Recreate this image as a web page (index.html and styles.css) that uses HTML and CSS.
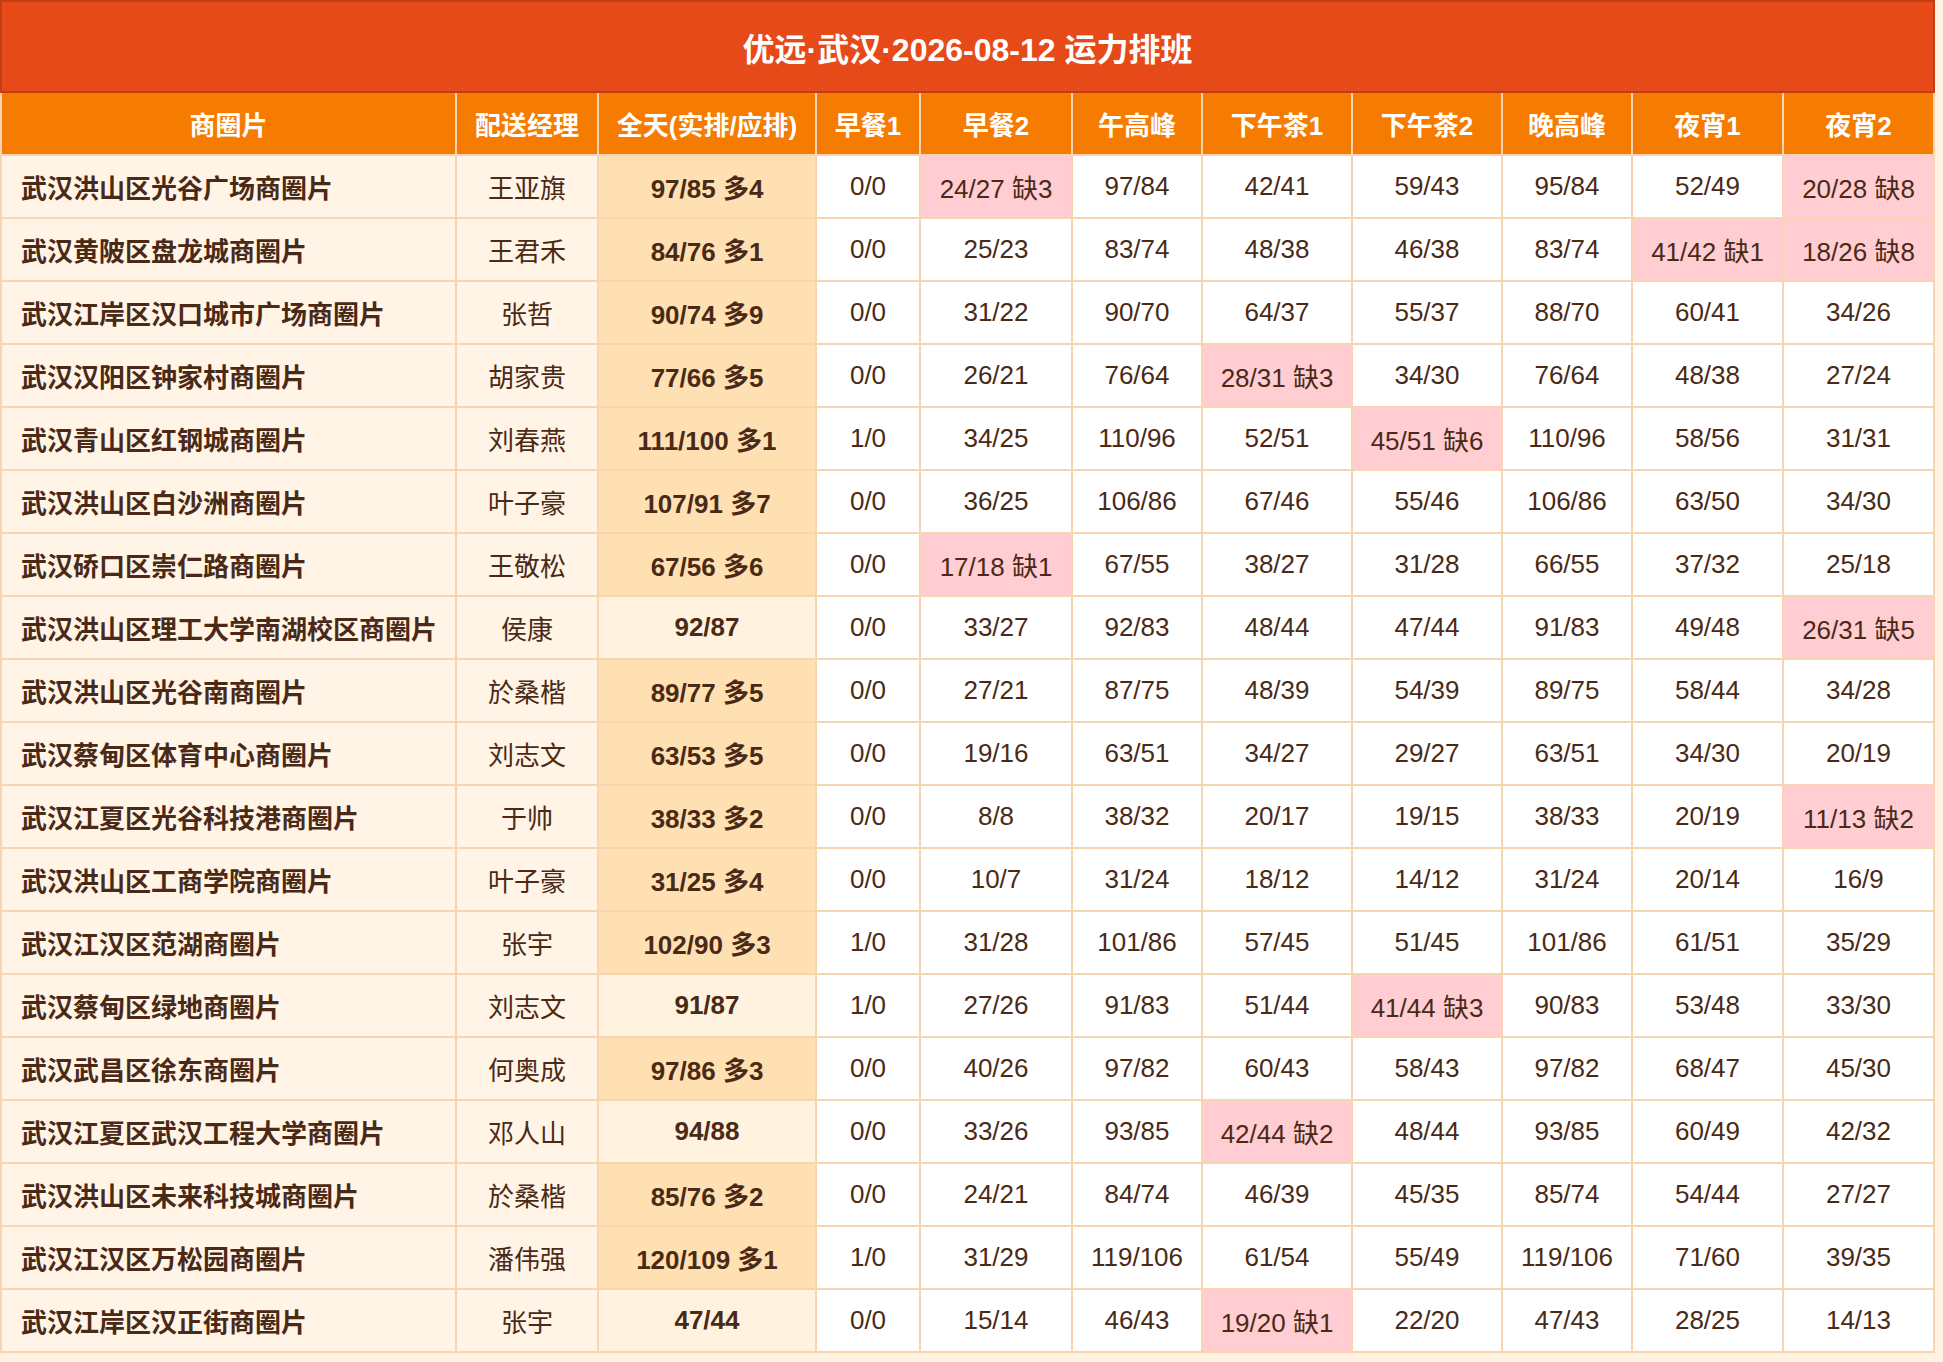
FILE: index.html
```html
<!DOCTYPE html>
<html lang="zh-CN">
<head>
<meta charset="utf-8">
<title>运力排班</title>
<link rel="stylesheet" href="styles.css">
</head>
<body>
<div class="page">
  <div class="title">优远·武汉·2026-08-12 运力排班</div>
  <div class="grid">
    <div class="hd">商圈片</div><div class="hd">配送经理</div><div class="hd">全天(实排/应排)</div><div class="hd">早餐1</div><div class="hd">早餐2</div><div class="hd">午高峰</div><div class="hd">下午茶1</div><div class="hd">下午茶2</div><div class="hd">晚高峰</div><div class="hd">夜宵1</div><div class="hd">夜宵2</div>

    <div class="c name">武汉洪山区光谷广场商圈片</div><div class="c mgr">王亚旗</div><div class="c total">97/85 多4</div><div class="c">0/0</div><div class="c short">24/27 缺3</div><div class="c">97/84</div><div class="c">42/41</div><div class="c">59/43</div><div class="c">95/84</div><div class="c">52/49</div><div class="c short">20/28 缺8</div>

    <div class="c name">武汉黄陂区盘龙城商圈片</div><div class="c mgr">王君禾</div><div class="c total">84/76 多1</div><div class="c">0/0</div><div class="c">25/23</div><div class="c">83/74</div><div class="c">48/38</div><div class="c">46/38</div><div class="c">83/74</div><div class="c short">41/42 缺1</div><div class="c short">18/26 缺8</div>

    <div class="c name">武汉江岸区汉口城市广场商圈片</div><div class="c mgr">张哲</div><div class="c total">90/74 多9</div><div class="c">0/0</div><div class="c">31/22</div><div class="c">90/70</div><div class="c">64/37</div><div class="c">55/37</div><div class="c">88/70</div><div class="c">60/41</div><div class="c">34/26</div>

    <div class="c name">武汉汉阳区钟家村商圈片</div><div class="c mgr">胡家贵</div><div class="c total">77/66 多5</div><div class="c">0/0</div><div class="c">26/21</div><div class="c">76/64</div><div class="c short">28/31 缺3</div><div class="c">34/30</div><div class="c">76/64</div><div class="c">48/38</div><div class="c">27/24</div>

    <div class="c name">武汉青山区红钢城商圈片</div><div class="c mgr">刘春燕</div><div class="c total">111/100 多1</div><div class="c">1/0</div><div class="c">34/25</div><div class="c">110/96</div><div class="c">52/51</div><div class="c short">45/51 缺6</div><div class="c">110/96</div><div class="c">58/56</div><div class="c">31/31</div>

    <div class="c name">武汉洪山区白沙洲商圈片</div><div class="c mgr">叶子豪</div><div class="c total">107/91 多7</div><div class="c">0/0</div><div class="c">36/25</div><div class="c">106/86</div><div class="c">67/46</div><div class="c">55/46</div><div class="c">106/86</div><div class="c">63/50</div><div class="c">34/30</div>

    <div class="c name">武汉硚口区崇仁路商圈片</div><div class="c mgr">王敬松</div><div class="c total">67/56 多6</div><div class="c">0/0</div><div class="c short">17/18 缺1</div><div class="c">67/55</div><div class="c">38/27</div><div class="c">31/28</div><div class="c">66/55</div><div class="c">37/32</div><div class="c">25/18</div>

    <div class="c name">武汉洪山区理工大学南湖校区商圈片</div><div class="c mgr">侯康</div><div class="c total even">92/87</div><div class="c">0/0</div><div class="c">33/27</div><div class="c">92/83</div><div class="c">48/44</div><div class="c">47/44</div><div class="c">91/83</div><div class="c">49/48</div><div class="c short">26/31 缺5</div>

    <div class="c name">武汉洪山区光谷南商圈片</div><div class="c mgr">於桑楷</div><div class="c total">89/77 多5</div><div class="c">0/0</div><div class="c">27/21</div><div class="c">87/75</div><div class="c">48/39</div><div class="c">54/39</div><div class="c">89/75</div><div class="c">58/44</div><div class="c">34/28</div>

    <div class="c name">武汉蔡甸区体育中心商圈片</div><div class="c mgr">刘志文</div><div class="c total">63/53 多5</div><div class="c">0/0</div><div class="c">19/16</div><div class="c">63/51</div><div class="c">34/27</div><div class="c">29/27</div><div class="c">63/51</div><div class="c">34/30</div><div class="c">20/19</div>

    <div class="c name">武汉江夏区光谷科技港商圈片</div><div class="c mgr">于帅</div><div class="c total">38/33 多2</div><div class="c">0/0</div><div class="c">8/8</div><div class="c">38/32</div><div class="c">20/17</div><div class="c">19/15</div><div class="c">38/33</div><div class="c">20/19</div><div class="c short">11/13 缺2</div>

    <div class="c name">武汉洪山区工商学院商圈片</div><div class="c mgr">叶子豪</div><div class="c total">31/25 多4</div><div class="c">0/0</div><div class="c">10/7</div><div class="c">31/24</div><div class="c">18/12</div><div class="c">14/12</div><div class="c">31/24</div><div class="c">20/14</div><div class="c">16/9</div>

    <div class="c name">武汉江汉区范湖商圈片</div><div class="c mgr">张宇</div><div class="c total">102/90 多3</div><div class="c">1/0</div><div class="c">31/28</div><div class="c">101/86</div><div class="c">57/45</div><div class="c">51/45</div><div class="c">101/86</div><div class="c">61/51</div><div class="c">35/29</div>

    <div class="c name">武汉蔡甸区绿地商圈片</div><div class="c mgr">刘志文</div><div class="c total even">91/87</div><div class="c">1/0</div><div class="c">27/26</div><div class="c">91/83</div><div class="c">51/44</div><div class="c short">41/44 缺3</div><div class="c">90/83</div><div class="c">53/48</div><div class="c">33/30</div>

    <div class="c name">武汉武昌区徐东商圈片</div><div class="c mgr">何奥成</div><div class="c total">97/86 多3</div><div class="c">0/0</div><div class="c">40/26</div><div class="c">97/82</div><div class="c">60/43</div><div class="c">58/43</div><div class="c">97/82</div><div class="c">68/47</div><div class="c">45/30</div>

    <div class="c name">武汉江夏区武汉工程大学商圈片</div><div class="c mgr">邓人山</div><div class="c total even">94/88</div><div class="c">0/0</div><div class="c">33/26</div><div class="c">93/85</div><div class="c short">42/44 缺2</div><div class="c">48/44</div><div class="c">93/85</div><div class="c">60/49</div><div class="c">42/32</div>

    <div class="c name">武汉洪山区未来科技城商圈片</div><div class="c mgr">於桑楷</div><div class="c total">85/76 多2</div><div class="c">0/0</div><div class="c">24/21</div><div class="c">84/74</div><div class="c">46/39</div><div class="c">45/35</div><div class="c">85/74</div><div class="c">54/44</div><div class="c">27/27</div>

    <div class="c name">武汉江汉区万松园商圈片</div><div class="c mgr">潘伟强</div><div class="c total">120/109 多1</div><div class="c">1/0</div><div class="c">31/29</div><div class="c">119/106</div><div class="c">61/54</div><div class="c">55/49</div><div class="c">119/106</div><div class="c">71/60</div><div class="c">39/35</div>

    <div class="c name">武汉江岸区汉正街商圈片</div><div class="c mgr">张宇</div><div class="c total even">47/44</div><div class="c">0/0</div><div class="c">15/14</div><div class="c">46/43</div><div class="c short">19/20 缺1</div><div class="c">22/20</div><div class="c">47/43</div><div class="c">28/25</div><div class="c">14/13</div>
  </div>
</div>
</body>
</html>
```

FILE: styles.css
```css
html, body {
  margin: 0;
  padding: 0;
  background: #FFF3E0;
}
body {
  font-family: "Liberation Sans", "Noto Sans CJK SC", sans-serif;
  color: #4A2A16;
}
.page {
  width: 1935px;
}
.title {
  height: 89px;
  border: 2px solid #C43C14;
  background: #E64A19;
  color: #FFFFFF;
  font-size: 32px;
  font-weight: bold;
  display: flex;
  align-items: center;
  justify-content: center;
}
.grid {
  display: grid;
  grid-template-columns: 453px 140px 216px 102px 150px 128px 148px 148px 128px 149px 149px;
  grid-auto-rows: 61px;
  gap: 2px;
  padding: 0 2px 2px 2px;
  background: #F8D5B2;
}
.hd {
  background: #F57C00;
  color: #FFFFFF;
  font-size: 26px;
  font-weight: bold;
  display: flex;
  align-items: center;
  justify-content: center;
}
.c {
  background: #FFFFFF;
  font-size: 26px;
  display: flex;
  align-items: center;
  justify-content: center;
  white-space: nowrap;
}
.c.name {
  background: #FFF4E6;
  font-weight: bold;
  justify-content: flex-start;
  padding-left: 19px;
}
.c.mgr {
  background: #FFF4E6;
}
.c.total {
  background: #FFE0B2;
  font-weight: bold;
}
.c.total.even {
  background: #FFF3E0;
}
.c.short {
  background: #FFCDD2;
}
```
